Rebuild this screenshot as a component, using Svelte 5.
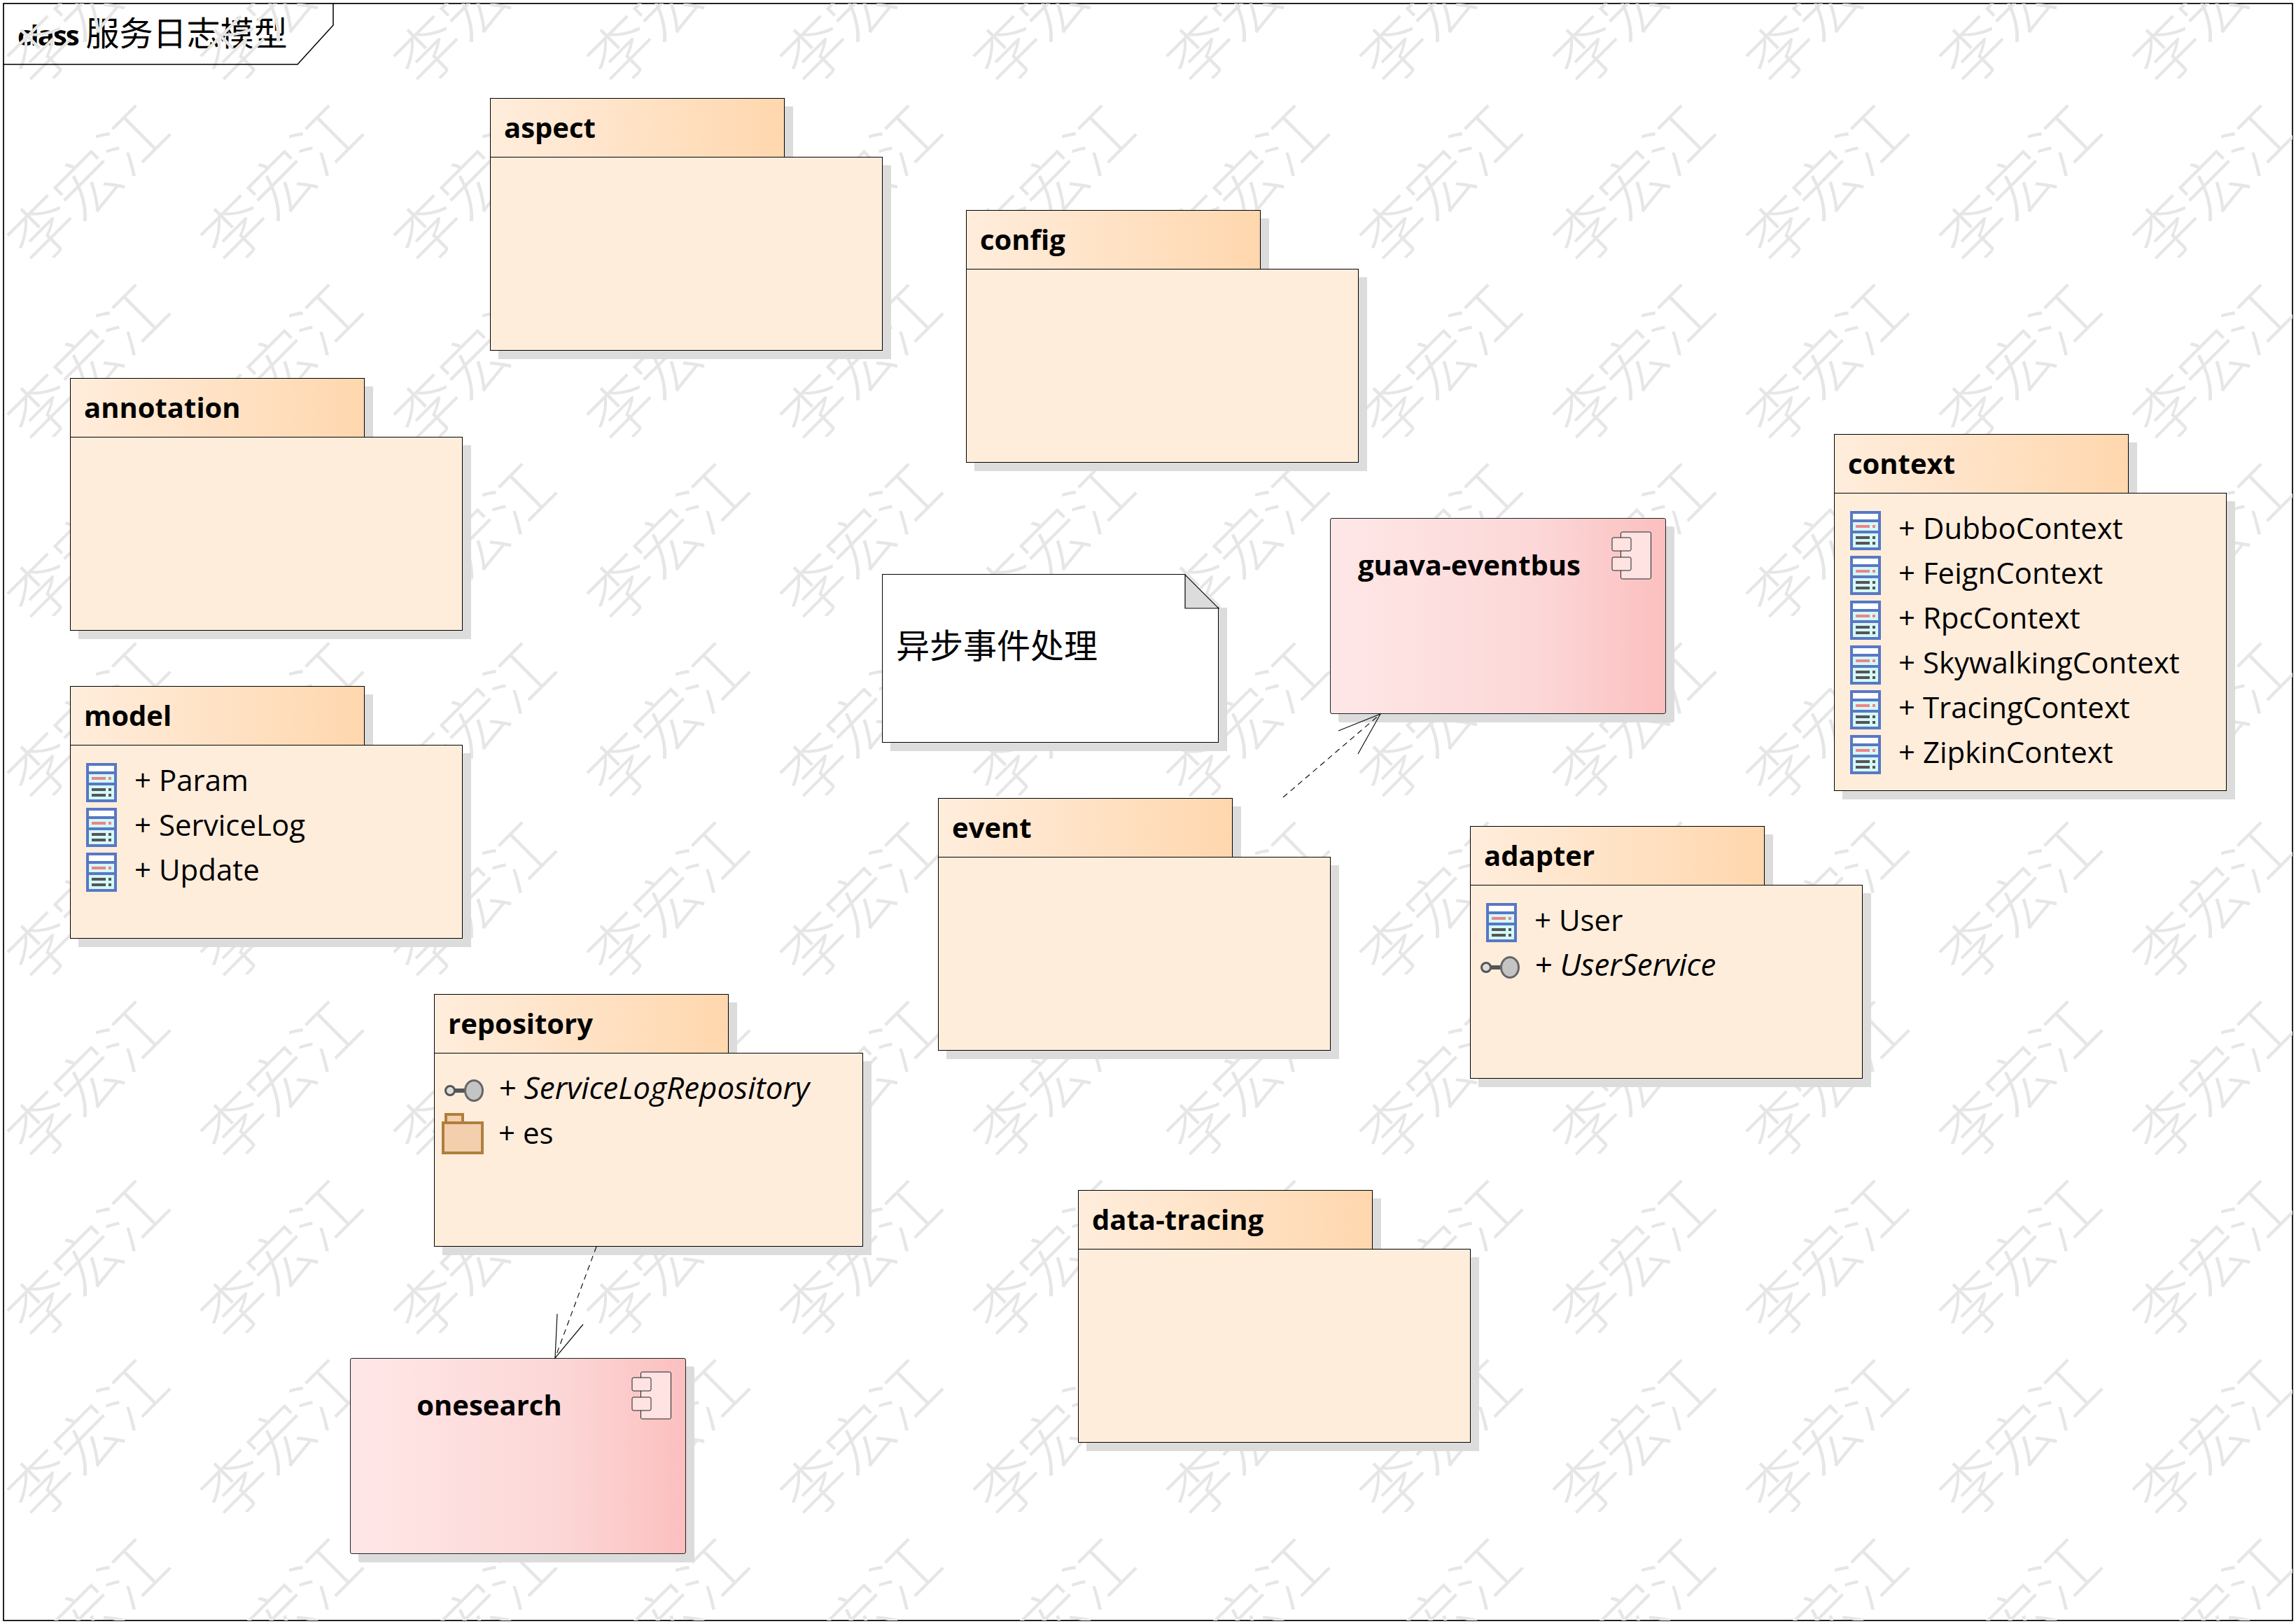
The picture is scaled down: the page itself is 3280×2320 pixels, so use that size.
<script>
  const packages = [
    { name: "aspect", x: 700, y: 140 },
    { name: "config", x: 1380, y: 300 },
    { name: "annotation", x: 100, y: 540 },
    {
      name: "model",
      x: 100,
      y: 980,
      items: [
        { kind: "class", label: "Param" },
        { kind: "class", label: "ServiceLog" },
        { kind: "class", label: "Update" }
      ]
    },
    { name: "event", x: 1340, y: 1140 },
    {
      name: "adapter",
      x: 2100,
      y: 1180,
      items: [
        { kind: "class", label: "User" },
        { kind: "iface", label: "UserService" }
      ]
    },
    {
      name: "repository",
      x: 620,
      y: 1420,
      w: 613,
      items: [
        { kind: "iface", label: "ServiceLogRepository" },
        { kind: "pkg", label: "es" }
      ]
    },
    { name: "data-tracing", x: 1540, y: 1700 },
    {
      name: "context",
      x: 2620,
      y: 620,
      h: 426,
      items: [
        { kind: "class", label: "DubboContext" },
        { kind: "class", label: "FeignContext" },
        { kind: "class", label: "RpcContext" },
        { kind: "class", label: "SkywalkingContext" },
        { kind: "class", label: "TracingContext" },
        { kind: "class", label: "ZipkinContext" }
      ]
    }
  ];

  const components = [
    { name: "guava-eventbus", x: 1900, y: 740 },
    { name: "onesearch", x: 500, y: 1940 }
  ];
</script>

<div class="canvas">
  <div class="frame"></div>
  <div class="title"><b>class</b> 服务日志模型</div>

  <svg class="layer" width="3280" height="2320">
    <defs>
      <pattern id="mark" patternUnits="userSpaceOnUse" x="-17" y="-112" width="276" height="256">
        <text
          transform="translate(138 115) rotate(-45)"
          text-anchor="middle"
          dominant-baseline="central"
          class="mark">李宏江</text>
      </pattern>
    </defs>
    <rect x="5" y="5" width="3270" height="2310" fill="url(#mark)" />
    <polyline points="4,92 425,92 476,36 476,4" fill="none" stroke="#000" stroke-width="1.5" />
  </svg>

  {#each packages as p}
    <div class="pkg" style="left:{p.x}px;top:{p.y}px">
      <div class="tab">{p.name}</div>
      <div class="body" style="width:{p.w ?? 561}px;height:{p.h ?? 277}px">
        {#each p.items ?? [] as item}
          <div class="row" class:italic={item.kind === "iface"}>
            <span class="slot">
              {#if item.kind === "class"}
                <svg class="ic-class" width="44" height="56" viewBox="0 0 44 56">
                  <rect width="44" height="56" fill="#5878c4" />
                  <rect x="4" y="4" width="36" height="8" fill="#fff" />
                  <rect x="4" y="16" width="36" height="12" fill="#d4f8f8" />
                  <rect x="4" y="32" width="36" height="20" fill="#d4f8f8" />
                  <rect x="8" y="20" width="20" height="4" fill="#f08484" />
                  <rect x="32" y="20" width="4" height="4" fill="#f08484" />
                  <rect x="8" y="36" width="20" height="4" fill="#555" />
                  <rect x="32" y="36" width="4" height="4" fill="#555" />
                  <rect x="8" y="44" width="20" height="4" fill="#555" />
                  <rect x="32" y="44" width="4" height="4" fill="#555" />
                </svg>
              {:else if item.kind === "iface"}
                <svg class="ic-iface" width="56" height="32" viewBox="0 0 56 32">
                  <rect x="14" y="13" width="16" height="6" fill="#555" />
                  <circle cx="8" cy="16" r="6.5" fill="#ddd" stroke="#555" stroke-width="3" />
                  <ellipse cx="42" cy="16" rx="12.5" ry="14.5" fill="#c4c4c4" stroke="#666" stroke-width="3" />
                </svg>
              {:else}
                <svg class="ic-pkg" width="60" height="59" viewBox="0 0 60 59">
                  <rect x="6" y="2" width="24" height="14" fill="#f4cfae" stroke="#b07f3e" stroke-width="4" />
                  <rect x="2" y="14" width="56" height="43" fill="#f4cfae" stroke="#b07f3e" stroke-width="4" />
                </svg>
              {/if}
            </span>
            <span class="label">+ {item.label}</span>
          </div>
        {/each}
      </div>
    </div>
  {/each}

  {#each components as c}
    <div class="comp" style="left:{c.x}px;top:{c.y}px">
      <span class="comp-name">{c.name}</span>
      <svg class="comp-icon" width="58" height="69" viewBox="0 0 58 69">
        <rect x="13.5" y="1" width="43" height="67" rx="2" fill="#ffe3e3" stroke="#222" />
        <rect x="1" y="9" width="27" height="19" rx="2" fill="#ffe3e3" stroke="#222" />
        <rect x="1" y="37" width="27" height="19" rx="2" fill="#ffe3e3" stroke="#222" />
      </svg>
    </div>
  {/each}

  <div class="note">
    <span>异步事件处理</span>
    <svg class="fold" width="50" height="50" viewBox="0 0 50 50">
      <path d="M1 1 L1 49 L49 49 Z" fill="#dcdcdc" stroke="#000" stroke-width="1.2" />
    </svg>
  </div>

  <svg class="layer arrows" width="3280" height="2320">
    <line x1="1833" y1="1139" x2="1972" y2="1020" stroke-dasharray="8 6" />
    <polyline points="1912,1044 1972,1020 1940,1077" />
    <line x1="852" y1="1781" x2="793" y2="1940" stroke-dasharray="8 6" />
    <polyline points="796,1877 793,1940 833,1892" />
  </svg>
</div>

<style>
  :global(body) {
    margin: 0;
    background: #fff;
  }
  .canvas {
    position: relative;
    width: 3280px;
    height: 2320px;
    overflow: hidden;
    font-family: "Open Sans", "Noto Sans CJK SC", sans-serif;
    color: #000;
  }
  .frame {
    position: absolute;
    left: 4px;
    top: 4px;
    width: 3272px;
    height: 2312px;
    box-sizing: border-box;
    border: 2px solid #222;
  }
  .title {
    position: absolute;
    left: 25px;
    top: 10px;
    font-size: 48px;
    line-height: 68px;
    white-space: nowrap;
    font-family: "Noto Sans CJK SC", sans-serif;
  }
  .title b {
    font-family: "Open Sans", sans-serif;
    font-size: 40px;
    letter-spacing: -2px;
  }
  .layer {
    position: absolute;
    left: 0;
    top: 0;
    pointer-events: none;
  }
  .mark {
    font-family: "Noto Sans CJK SC", sans-serif;
    font-weight: 300;
    font-size: 92px;
    fill: #e6e6e6;
  }
  .arrows {
    fill: none;
    stroke: #111;
    stroke-width: 1.2;
  }
  .pkg {
    position: absolute;
    display: flex;
    flex-direction: column;
    align-items: flex-start;
  }
  .tab {
    box-sizing: border-box;
    width: 421px;
    height: 85px;
    padding: 0 19px 2px;
    display: flex;
    align-items: center;
    font-weight: 700;
    font-size: 40px;
    border: 1.5px solid #000;
    background: linear-gradient(90deg, #ffeddc, #ffd7ae);
    box-shadow: 12px 12px 0 #dcdcdc;
  }
  .body {
    box-sizing: border-box;
    position: relative;
    margin-top: -1px;
    padding-top: 21px;
    border: 1.5px solid #000;
    background: #ffeddc;
    box-shadow: 12px 12px 0 #dcdcdc;
    font-size: 42px;
  }
  .row {
    display: flex;
    align-items: center;
    height: 64px;
    white-space: nowrap;
  }
  .row.italic {
    font-style: italic;
    font-size: 44px;
  }
  .label {
    margin-top: -10px;
  }
  .slot {
    position: relative;
    flex: none;
    width: 91px;
    height: 64px;
  }
  .slot svg {
    position: absolute;
    display: block;
  }
  .ic-class {
    left: 22px;
    top: 4px;
  }
  .ic-iface {
    left: 14px;
    top: 16px;
  }
  .ic-pkg {
    left: 10px;
    top: 0;
  }
  .comp {
    position: absolute;
    box-sizing: border-box;
    width: 480px;
    height: 280px;
    padding: 38px 82px 0 0;
    display: flex;
    justify-content: center;
    align-items: flex-start;
    border: 1.5px solid #222;
    border-radius: 3px;
    background: linear-gradient(90deg, #ffe7e7, #fcd7d7 62%, #fcbfbf);
    box-shadow: 12px 12px 0 #dcdcdc;
    font-weight: 700;
    font-size: 40px;
  }
  .comp-icon {
    position: absolute;
    right: 19px;
    top: 18px;
  }
  .note {
    position: absolute;
    left: 1260px;
    top: 820px;
    box-sizing: border-box;
    width: 481px;
    height: 241px;
    padding: 64px 0 0 19px;
    font-family: "Noto Sans CJK SC", sans-serif;
    font-size: 48px;
    line-height: 68px;
    background: #fff;
    border: 1.5px solid #000;
    clip-path: polygon(0 0, 433px 0, 100% 48px, calc(100% + 14px) 48px, calc(100% + 14px) calc(100% + 14px), 0 calc(100% + 14px));
    box-shadow: 12px 12px 0 #dcdcdc;
  }
  .fold {
    position: absolute;
    right: -1.5px;
    top: -1.5px;
  }
</style>
